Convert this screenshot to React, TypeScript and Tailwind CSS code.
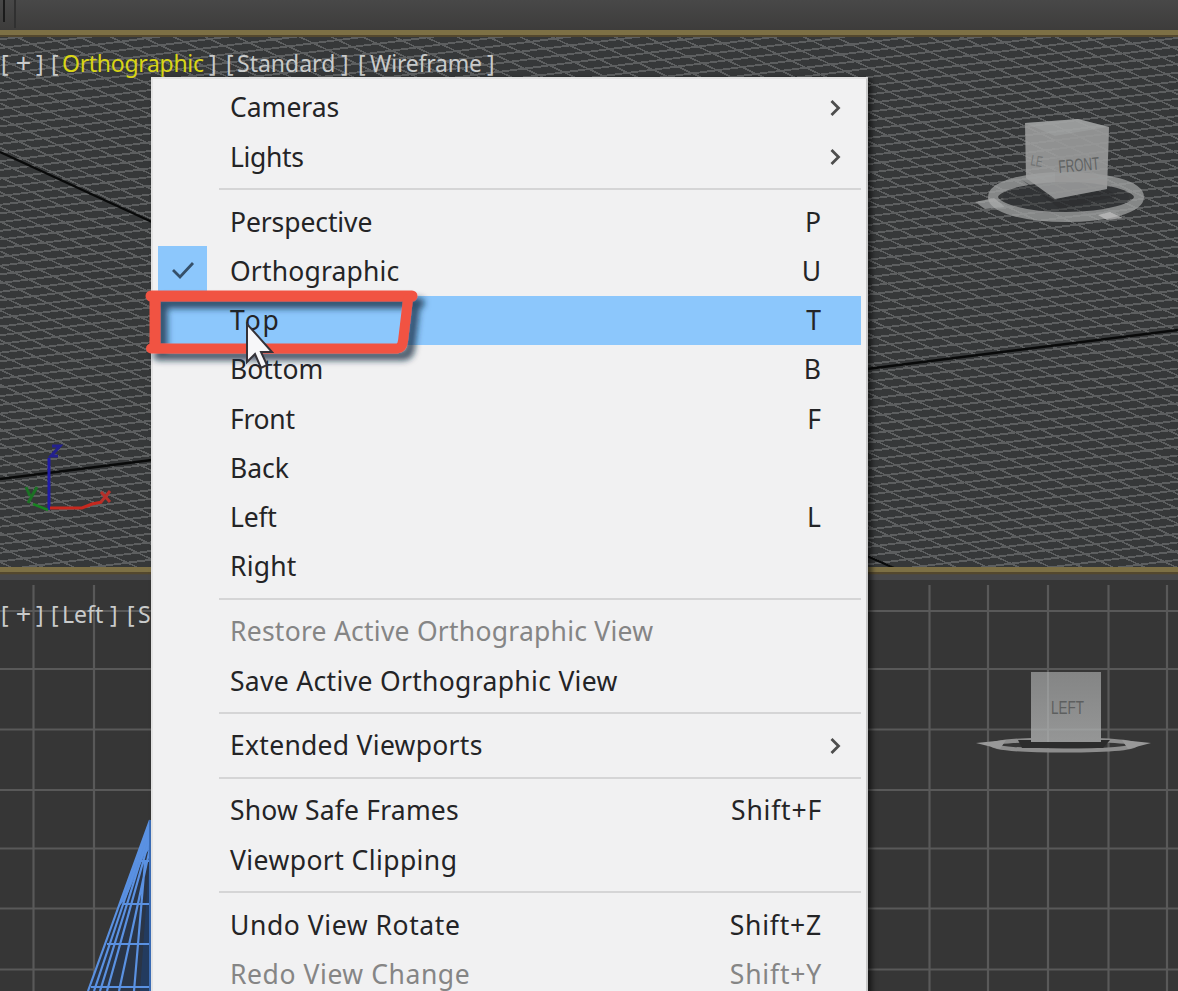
import { Fragment } from "react";

type Item = {
  label: string;
  keys?: string;
  spacing?: string;
  submenu?: boolean;
  checked?: boolean;
  active?: boolean;
  disabled?: boolean;
};

const groups: Item[][] = [
  [
    { label: "Cameras", submenu: true },
    { label: "Lights", spacing: "tracking-[-0.35px]", submenu: true },
  ],
  [
    { label: "Perspective", spacing: "tracking-[-0.1px]", keys: "P" },
    { label: "Orthographic", spacing: "tracking-[0.17px]", keys: "U", checked: true },
    { label: "Top", spacing: "tracking-[1.8px]", keys: "T", active: true },
    { label: "Bottom", keys: "B" },
    { label: "Front", spacing: "tracking-[-0.3px]", keys: "F" },
    { label: "Back" },
    { label: "Left", spacing: "tracking-[-0.2px]", keys: "L" },
    { label: "Right", spacing: "tracking-[0.2px]" },
  ],
  [
    { label: "Restore Active Orthographic View", spacing: "tracking-[0.24px]", disabled: true },
    { label: "Save Active Orthographic View", spacing: "tracking-[0.32px]" },
  ],
  [{ label: "Extended Viewports", spacing: "tracking-[0.28px]", submenu: true }],
  [
    { label: "Show Safe Frames", spacing: "tracking-[0.18px]", keys: "Shift+F" },
    { label: "Viewport Clipping", spacing: "tracking-[0.42px]" },
  ],
  [
    { label: "Undo View Rotate", spacing: "tracking-[0.57px]", keys: "Shift+Z" },
    { label: "Redo View Change", spacing: "tracking-[0.57px]", keys: "Shift+Y", disabled: true },
  ],
];

function family(slope: number, step: number, offset: number) {
  let d = "";
  for (let y = -700; y < 1300; y += step) {
    const start = y + offset;
    d += `M0 ${start.toFixed(1)}L1178 ${(start + slope * 1178).toFixed(1)}`;
  }
  return d;
}

const shallow = family(-0.127, 8.7, 0);
const steep = family(0.47, 14.8, 4);

function MenuRow({ item }: { item: Item }) {
  const color = item.disabled ? "text-[#858585]" : "text-[#242426]";
  return (
    <div className={`flex h-[49.25px] items-center ${item.active ? "bg-[#8cc7fc]" : ""}`}>
      <div className={`flex h-full w-[49px] items-center justify-center ${item.checked ? "bg-[#8cc7fc]" : ""}`}>
        {item.checked && (
          <svg width="26" height="24" viewBox="0 0 26 24" fill="none" stroke="#35506a" strokeWidth="2.8">
            <path d="M3 11L10 18L23 4" />
          </svg>
        )}
      </div>
      <span className={`ml-[23px] flex-1 whitespace-pre ${item.spacing ?? ""} ${color}`}>{item.label}</span>
      {item.keys && (
        <span className={`${item.keys.length > 1 ? "mr-[39px] tracking-[0.8px]" : "mr-10"} ${color}`}>{item.keys}</span>
      )}
      {item.submenu && (
        <svg className="mr-[18px]" width="16" height="20" viewBox="0 0 16 20" fill="none" stroke="#4d4d4d" strokeWidth="2.8">
          <path d="M4.500 3L11.500 10L4.500 17" />
        </svg>
      )}
    </div>
  );
}

function Tag({ text, className, pad, open }: { text: string; className: string; pad: string; open?: boolean }) {
  return (
    <span className={`flex shrink-0 ${pad}`}>
      <span className="w-[10px]">[</span>
      <span className={className}>{text}</span>
      {!open && <span className="w-[10px]">]</span>}
    </span>
  );
}

function TopScene() {
  return (
    <svg className="block h-full w-full" viewBox="0 30 1178 543">
      <rect y="30" width="1178" height="543" fill="#363839" />
      <g fill="none" stroke="#5d5f60" strokeWidth="1.6" shapeRendering="crispEdges">
        <path d={shallow} strokeWidth="1.9" />
        <path d={steep} />
      </g>
      <g stroke="#090a0a" strokeWidth="2.4">
        <path d="M0 152L152 222M0 479L152 460M867 369L1178 330M867 556L894 568" fill="none" />
      </g>
      <path d="M0 571H1178" stroke="#48484a" strokeWidth="4" />
      <path d="M0 32.500H1178M0 569.500H1178" stroke="#7d7045" strokeWidth="5" />
      <path d="M0 36H1178M0 573H1178" stroke="#54482e" strokeWidth="2" />
      <g fill="none" strokeWidth="3">
        <path d="M49 510V458" stroke="#211ca8" />
        <path d="M52 446H60L51 456H58" stroke="#23208e" strokeWidth="3" />
        <path d="M50 508H82L92 504L102 502" stroke="#c5281e" />
        <path d="M101 492L110 502M110 491L101 502" stroke="#b6302a" strokeWidth="3" />
        <path d="M48 510L33 504" stroke="#188321" strokeWidth="2.5" />
        <path d="M26 487L30 496M37 487L28 503" stroke="#1b7124" strokeWidth="3" />
      </g>
      <g>
        <ellipse cx="1066" cy="197" rx="63" ry="18" fill="#2f3132" fillOpacity="0.45" />
        <ellipse cx="1066" cy="197" rx="73" ry="20" fill="none" stroke="#a0a2a2" strokeOpacity="0.75" strokeWidth="10" />
        <path d="M975 202L994 198L1005 207L985 209Z" fill="#afb1b1" fillOpacity="0.65" />
        <path d="M1098 215L1110 212L1123 218L1107 220Z" fill="#c4c4c4" fillOpacity="0.7" />
        <path d="M1022 180L1055 200L1108 190L1118 196L1060 209Z" fill="#2b2d2e" fillOpacity="0.6" />
        <path d="M1025 123L1078 119L1109 127L1107 189L1055 199L1026 178Z" fill="#a0a1a1" fillOpacity="0.85" />
        <path d="M1025 123L1078 119L1109 127L1055 136Z" fill="#adaeae" fillOpacity="0.3" />
        <path d="M1055 136L1109 127L1107 189L1055 199Z" fill="#919292" fillOpacity="0.3" />
        <text x="1059" y="173" transform="rotate(-5 1059 173)" textLength="41" lengthAdjust="spacingAndGlyphs" fontSize="18" fill="#606363" className="font-['Liberation_Sans']">FRONT</text>
        <text x="1030" y="165" transform="rotate(10 1030 165)" textLength="12" lengthAdjust="spacingAndGlyphs" fontSize="15" fill="#707373" className="font-['Liberation_Sans']">LE</text>
      </g>
    </svg>
  );
}

function LeftScene() {
  return (
    <svg className="block h-full w-full" viewBox="0 573 1178 418">
      <defs>
        <linearGradient id="face" x1="0" y1="0" x2="0" y2="1">
          <stop offset="0" stopColor="#848585" />
          <stop offset="1" stopColor="#959696" />
        </linearGradient>
      </defs>
      <rect y="573" width="1178" height="418" fill="#363636" />
      <path d="M0 577H1178" stroke="#48484a" strokeWidth="6" />
      <path d="M0 573.500H1178" stroke="#54482e" strokeWidth="1.5" />
      <path
        d="M33.500 585V991M94 585V991M929.500 585V991M988 585V991M1048 585V991M1108.500 585V991M1167 585V991M0 611H1178M0 669H1178M0 729.500H1178M0 790H1178M0 848.500H1178M0 908.500H1178M0 969.500H1178"
        stroke="#595959"
        strokeWidth="2.2"
      />
      <path d="M150 820L88 991H152Z" fill="#2a3547" />
      <path d="M150 850L140 991H152Z" fill="#20406f" fillOpacity="0.6" />
      <path d="M150 820L118 908L126 898L144 856L152 846Z" fill="#568cdb" />
      <path
        d="M150 820L88 991M150 824L94 991M150 830L100 991M150 837L107 991M150 848L119 991M145 862L134 991M136 861H152M124 904H152M107 944H152M91 987H152"
        fill="none"
        stroke="#5a91e2"
        strokeWidth="2.2"
      />
      <path d="M150.500 820V991" stroke="#3c6eb8" strokeWidth="3" />
      <ellipse cx="1064" cy="745" rx="72" ry="5.500" fill="none" stroke="#8d8d8d" strokeWidth="4" />
      <path d="M976 743L1006 740L1000 749ZM1151 743L1122 740L1128 749Z" fill="#999" />
      <path d="M1018 740H1110L1103 748H1022Z" fill="#2c2c2c" />
      <rect x="1031" y="672" width="70" height="70" fill="url(#face)" />
      <path d="M1031 729.500H1101M1048 672V742" stroke="#a8a9a9" strokeOpacity="0.4" strokeWidth="2" />
      <text x="1051" y="714" textLength="33" lengthAdjust="spacingAndGlyphs" fontSize="19" fill="#5d5f5f" className="font-['Liberation_Sans']">LEFT</text>
    </svg>
  );
}

export default function App() {
  return (
    <main className="relative flex h-[991px] w-[1178px] flex-col overflow-hidden bg-[#363636] font-['Noto_Sans','Noto_Sans_CJK_TC',sans-serif]">
      <header className="flex h-[30px] shrink-0 bg-linear-to-b from-[#484848] to-[#3d3c3b]">
        <div className="h-[22px] w-[5px] border-r-2 border-[#1b1b1b]" />
        <div className="h-[28px] w-[11px] border-r-2 border-[#303030]" />
      </header>
      <section className="relative h-[543px] shrink-0">
        <TopScene />
        <div className="absolute top-[17px] left-px flex text-[23px] leading-[32px] text-[#c9cbcb]">
          <Tag text="+" pad="w-[50px]" className="w-[25px] text-center text-[27px]" />
          <Tag text="Orthographic" pad="w-[175px]" className="w-[148px] pl-px tracking-[-0.3px] text-[#d9d515]" />
          <Tag text="Standard" pad="w-[132px]" className="w-[105px] pl-px" />
          <Tag text="Wireframe" pad="w-[150px]" className="w-[119px] pl-[2px] tracking-[-0.2px]" />
        </div>
      </section>
      <section className="relative h-[418px] shrink-0">
        <LeftScene />
        <div className="absolute top-[25px] left-px flex text-[23px] leading-[32px] text-[#c9cbcb]">
          <Tag text="+" pad="w-[50px]" className="w-[25px] text-center text-[27px]" />
          <Tag text="Left" pad="w-[76px]" className="w-[49px] pl-px" />
          <Tag text="S" pad="w-[25px]" className="pl-px" open />
        </div>
      </section>

      <nav className="absolute top-[77px] left-[151px] h-[930px] w-[717px] border-2 border-[#e3e3e3] border-r-[#c8c8c8] bg-[#f1f1f2] px-[5px] pt-[4px] text-[26.5px] leading-none shadow-[4px_2px_5px_rgba(0,0,0,0.55)]">
        {groups.map((items, index) => (
          <Fragment key={index}>
            {index > 0 && (
              <div className="flex h-[15.700px] items-center">
                <div className="ml-[61px] h-[2px] flex-1 bg-[#d5d5d6]" />
              </div>
            )}
            {items.map((item) => (
              <MenuRow key={item.label} item={item} />
            ))}
          </Fragment>
        ))}
      </nav>

      <svg className="absolute top-[280px] left-[140px]" width="300" height="96" viewBox="140 280 300 96">
        <defs>
          <filter id="drop" x="-10%" y="-30%" width="125%" height="175%">
            <feDropShadow dx="7" dy="7" stdDeviation="3" floodColor="#172a3c" floodOpacity="0.75" />
          </filter>
        </defs>
        <g fill="none" stroke="#f15342" filter="url(#drop)">
          <path d="M151 296H412" strokeWidth="11" strokeLinecap="round" />
          <path d="M155 296V347" strokeWidth="11" />
          <path d="M151 348.500H397Q402 348 403 341L408 299" strokeWidth="10" strokeLinecap="round" strokeLinejoin="round" />
        </g>
        <path d="M247 324V362L255 354L261 368L267 365L261 352H272Z" fill="#f7f7f9" stroke="#343238" strokeWidth="2" />
      </svg>
    </main>
  );
}
